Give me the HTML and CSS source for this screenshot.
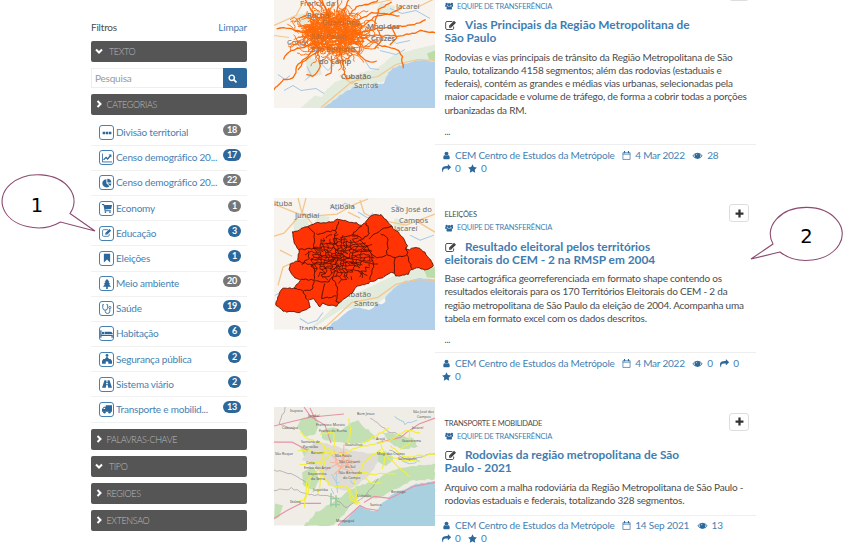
FILE: index.html
```html
<!DOCTYPE html>
<html lang="pt-BR">
<head>
<meta charset="utf-8">
<title>Catálogo de dados</title>
<link rel="stylesheet" href="styles.css">
</head>
<body>
<svg class="defs" aria-hidden="true">
  <symbol id="i-down" viewBox="0 0 16 16"><path d="M2 5l6 6 6-6" fill="none" stroke="currentColor" stroke-width="4"/></symbol>
  <symbol id="i-right" viewBox="0 0 16 16"><path d="M5 2l6 6-6 6" fill="none" stroke="currentColor" stroke-width="4"/></symbol>
  <symbol id="i-search" viewBox="0 0 16 16"><circle cx="6.7" cy="6.7" r="4.7" fill="none" stroke="currentColor" stroke-width="2.6"/><path d="M10 10l5 5" stroke="currentColor" stroke-width="3"/></symbol>
  <symbol id="i-dots" viewBox="0 0 16 16"><path d="M1 6h4v4H1zM6 6h4v4H6zM11 6h4v4h-4z"/></symbol>
  <symbol id="i-chart" viewBox="0 0 16 16"><path d="M.7 1v13.3H16" fill="none" stroke="currentColor" stroke-width="1.4"/><path d="M2.500 11l4-4 2.500 2.500 4.500-5" fill="none" stroke="currentColor" stroke-width="2.200"/><path d="M10.500 2.500H15V7z"/></symbol>
  <symbol id="i-pie" viewBox="0 0 16 16"><path d="M7 2v6.500l4.800 4.500A6.500 6.500 0 1 1 7 2z"/><path d="M8.500 1A6.500 6.500 0 0 1 15 7.300H8.500zM9 8.700h6a6 6 0 0 1-1.800 4z"/></symbol>
  <symbol id="i-cart" viewBox="0 0 16 16"><path d="M0 1.500h3.300L3.700 3H16l-1.300 6.500-9.500 1 .3 1H14V13H4.300L2.300 3H0z"/><circle cx="5.500" cy="14.500" r="1.400"/><circle cx="12.800" cy="14.500" r="1.400"/></symbol>
  <symbol id="i-edit" viewBox="0 0 18 16"><path d="M13 9.500V12a2 2 0 0 1-2 2H3a2 2 0 0 1-2-2V4a2 2 0 0 1 2-2h8" fill="none" stroke="currentColor" stroke-width="1.400"/><path d="M6 8.200L13.500.8l3 3L9 11.300H6zM7.200 9v1.200h1.200z" fill-rule="evenodd"/></symbol>
  <symbol id="i-bookmark" viewBox="0 0 16 16"><path d="M3 1h10v14l-5-4.500L3 15z"/></symbol>
  <symbol id="i-tree" viewBox="0 0 16 16"><path d="M8 0l4 4.500h-1.800l3 3.700h-2l3.300 4.300H9.300V16H6.700v-3.500H1.500l3.300-4.300h-2l3-3.700H4z"/></symbol>
  <symbol id="i-steth" viewBox="0 0 16 16"><path d="M3 1H1.200v5a3.900 3.900 0 0 0 7.800 0V1H7M5.100 10v1.500a3.700 3.700 0 0 0 7.400 0V7" fill="none" stroke="currentColor" stroke-width="1.400"/><circle cx="12.600" cy="5.500" r="1.700" fill="none" stroke="currentColor" stroke-width="1.300"/></symbol>
  <symbol id="i-bed" viewBox="0 0 20 16"><path d="M0 2h2v7h18v5h-2v-3H2v3H0zM7 4.500h9a4 4 0 0 1 4 3.500H7z"/><circle cx="4.500" cy="6.200" r="2"/></symbol>
  <symbol id="i-people" viewBox="0 0 16 16"><circle cx="8" cy="2.300" r="2.200"/><path d="M8 4l3.500 4h2.300l2.200 3v4.500h-6V12H6v3.500H0V11l2.200-3h2.300z"/></symbol>
  <symbol id="i-road" viewBox="0 0 16 16"><path fill-rule="evenodd" d="M4 2h3l-.2 2.500h2.400L9 2h3l4 12H9.800L9.500 10h-3l-.3 4H0zM6.700 6l-.2 2.500h3L9.300 6z"/></symbol>
  <symbol id="i-truck" viewBox="0 0 16 16"><path fill-rule="evenodd" d="M16 2H6v2.500H3L0 8v4.500h16zM1.500 8L3.700 6H5v2z"/><circle cx="4" cy="13" r="2"/><circle cx="12" cy="13" r="2"/></symbol>
  <symbol id="i-group" viewBox="0 0 18 16"><circle cx="3.500" cy="3.600" r="2.500"/><circle cx="14.500" cy="3.600" r="2.500"/><circle cx="9" cy="5" r="3.600"/><path d="M0 9.500q0-4 2-4 1.500 1 3 .7Q5 8 6 9.500H0zM18 9.500q0-4-2-4-1.500 1-3 .7.200 1.800-.8 3.300H18zM3 13.300q0-5 3-5 3 2 6 0 3 0 3 5 0 2.200-2 2.200H5q-2 0-2-2.200z"/></symbol>
  <symbol id="i-user" viewBox="0 0 1792 1792"><path d="M1536 1399q0 109-62.500 187t-150.500 78h-854q-88 0-150.500-78t-62.500-187q0-85 8.500-160.500t31.500-152 58.500-131 94-89 134.500-34.500q131 128 313 128t313-128q76 0 134.500 34.500t94 89 58.500 131 31.500 152 8.500 160.500zm-256-887q0 159-112.500 271.500t-271.500 112.500-271.500-112.500-112.500-271.500 112.500-271.500 271.500-112.500 271.500 112.500 112.500 271.500z"/></symbol>
  <symbol id="i-cal" viewBox="0 0 16 16"><path d="M1.600 3h12.800v12H1.600zM1.600 5.700h12.800" fill="none" stroke="currentColor" stroke-width="1.200"/><path d="M3.500 0h2v4h-2zM10.500 0h2v4h-2z"/></symbol>
  <symbol id="i-eye" viewBox="0 0 18 16"><path fill-rule="evenodd" d="M0 8.500Q3.500 3 9 3t9 5.500Q14.500 14 9 14T0 8.500zm1.700 0Q3 10.500 5 11.700A5 5 0 0 1 5 5Q3 6.500 1.700 8.500zm14.600 0Q15 6.500 13 5a5 5 0 0 1 0 6.700q2-1.200 3.300-3.200zM9 4.700a3 3 0 0 0-3 3h1a2 2 0 0 1 2-2z"/></symbol>
  <symbol id="i-share" viewBox="0 0 1792 1792"><path d="M1792 640q0 26-19 45l-512 512q-19 19-45 19t-45-19-19-45v-256h-224q-98 0-175.500 6t-154 21.500-133 42.500-105.500 69.500-80 101-48.500 138.500-17.500 181q0 55 5 123 0 6 2.500 23.500t2.500 26.500q0 15-8.500 25t-23.500 10q-16 0-28-17-7-9-13-22t-13.500-30-10.500-24q-127-285-127-451 0-199 53-333 162-403 875-403h224v-256q0-26 19-45t45-19 45 19l512 512q19 19 19 45z"/></symbol>
  <symbol id="i-star" viewBox="0 0 16 16"><path d="M8 .5l2.400 4.900 5.400.8-3.900 3.800.9 5.400L8 12.900l-4.800 2.500.9-5.400L.2 6.200l5.400-.8z"/></symbol>
  <symbol id="i-plus" viewBox="0 0 16 16"><path d="M6 1h4v5h5v4h-5v5H6v-5H1V6h5z"/></symbol>
</svg>

<div class="page">
  <aside class="filters">
    <div class="filters-head"><span>Filtros</span><a>Limpar</a></div>
    <div class="bar"><svg><use href="#i-down"/></svg><span class="wide">TEXTO</span></div>
    <div class="search"><span>Pesquisa</span><b><svg><use href="#i-search"/></svg></b></div>
    <div class="bar"><svg><use href="#i-right"/></svg><span>CATEGORIAS</span></div>
    <ul class="cats">
      <li><i><svg><use href="#i-dots"/></svg></i><a>Divisão territorial</a><em>18</em></li>
      <li><i><svg><use href="#i-chart"/></svg></i><a>Censo demográfico 20...</a><em class="on">17</em></li>
      <li><i><svg><use href="#i-pie"/></svg></i><a>Censo demográfico 20...</a><em>22</em></li>
      <li><i><svg><use href="#i-cart"/></svg></i><a>Economy</a><em>1</em></li>
      <li><i><svg><use href="#i-edit"/></svg></i><a>Educação</a><em class="on">3</em></li>
      <li><i><svg><use href="#i-bookmark"/></svg></i><a>Eleições</a><em class="on">1</em></li>
      <li><i><svg><use href="#i-tree"/></svg></i><a>Meio ambiente</a><em>20</em></li>
      <li><i><svg><use href="#i-steth"/></svg></i><a>Saúde</a><em class="on">19</em></li>
      <li><i><svg class="big"><use href="#i-bed"/></svg></i><a>Habitação</a><em class="on">6</em></li>
      <li><i><svg><use href="#i-people"/></svg></i><a>Segurança pública</a><em class="on">2</em></li>
      <li><i><svg><use href="#i-road"/></svg></i><a>Sistema viário</a><em class="on">2</em></li>
      <li><i><svg><use href="#i-truck"/></svg></i><a>Transporte e mobilid...</a><em class="on">13</em></li>
    </ul>
    <div class="bar"><svg><use href="#i-right"/></svg><span>PALAVRAS-CHAVE</span></div>
    <div class="bar"><svg><use href="#i-down"/></svg><span class="wide">TIPO</span></div>
    <div class="bar"><svg><use href="#i-right"/></svg><span>REGIOES</span></div>
    <div class="bar"><svg><use href="#i-right"/></svg><span>EXTENSAO</span></div>
  </aside>

  <main class="results">
    <article class="card first">
      <svg class="map" viewBox="4 -23.500 161 131.500" preserveAspectRatio="none">
        <rect x="4" y="-24" width="161" height="132" fill="#f7f3ee"/>
        <g fill="#e3ebdc"><path class="rough" d="M25 15l22-5 18 8-12 10-22 3z"/><path d="M110 2l16 4-6 9-14-4z"/><path class="rough" d="M58 87l20-12 28-6 18-15 41-10v18l-22 3-26 16-34 5-28 22H45z"/><path d="M35 55l14 5 3 14-14 4zM45 95l13 3-10 10H30z"/></g>
        <path d="M165 50l-8 3 2 6 6 1z" fill="#bcdcaa"/>
        <path class="rough" d="M51 109L72 94 85 85 100 88 104 82 113 84 117 75 122 68 135 63 150 60 167 61V109z" fill="#b3d0ea"/>
        <g fill="none" stroke="#a5c8e6" stroke-width="1"><path d="M8 74l7 5 5-4M14 90l9-5 8 5 15-2 8 5M35 80l6-6-4-8M50 62l8-6 6 8-6 6zM120 8l12 5 14-3 14 8M110 50l16 4 9-5M95 60l5 8 9 1M118 35l8 8 14-3"/></g>
        <g fill="none" stroke="#f3c68d" stroke-width="1.200"><path d="M51 107L82 81l26-5 18-12 22-5 17 1M4 35l15 2M4 25l22-10 8-15M95 5l28-6M70 75l12 8 8-6M145 8l20-10"/></g>
        <g class="maplabel"><text x="30" y="5">Franco da</text><text x="37" y="17">Rocha</text><text x="52" y="24">Guarulhos</text><text x="17" y="44">Cotia</text><text x="41" y="38">São Paulo</text><text x="41" y="51">São Bernard</text><text x="49" y="63">do Camp</text><text x="71" y="78">Cubatão</text><text x="84" y="87">Santos</text><text x="97" y="28">Mogi das</text><text x="101" y="40">Cruzes</text><text x="126" y="8">Jacareí</text></g>
        <g id="roads" fill="none" stroke="#ff6a08"></g>
        <g fill="none" stroke="#ff6a08" stroke-width="1.300"><path class="rough" d="M4 90L12 80 24 77 27 65 37 57 45 47 57 37"/><path class="rough" d="M80 34L108 28 120 27 140 25 155 20"/><path class="rough" d="M80 34L112 35 130 35 144 33 150 30 165 32"/><path class="rough" d="M90 36L114 46 128 49 132 55 133 68"/><path class="rough" d="M70 45L73 64 76 79 82 76"/><path class="rough" d="M75 20L87 6 105 2 117-10"/><path class="rough" d="M80 24L103 12 119 14 133 6"/><path class="rough" d="M45 33L25 30 16 27 7 28"/><path class="rough" d="M45 42L28 48 18 51 14 59"/><path class="rough" d="M60 20L50-5"/><path class="rough" d="M50 23L33-3"/><path class="rough" d="M60 16L47-6"/><path class="rough" d="M67 14L69-8"/><path class="rough" d="M73 16L80-4"/><path class="rough" d="M62 55L62 70 56 76"/><path class="rough" d="M52 48L33 62 28 70"/><path class="rough" d="M82 46L96 61 106 61"/><path class="rough" d="M90 28L105 16 119 14 130 16"/><path class="rough" d="M48 50L50 67 44 76 37 74"/><path class="rough" d="M104 29L108 10 122 2"/><path class="rough" d="M108 28L112 40 104 48"/><path class="rough" d="M122 27L126 38 120 44"/></g>
        <g class="maplabel faint"><text x="37" y="17">Rocha</text><text x="52" y="24">Guarulhos</text><text x="41" y="38">São Paulo</text><text x="41" y="51">São Bernard</text><text x="49" y="63">do Camp</text><text x="71" y="78">Cubatão</text><text x="97" y="28">Mogi das</text><text x="101" y="40">Cruzes</text></g>
      </svg>
      <div class="body">
        <div class="top"><div><div class="team spaced"><svg><use href="#i-group"/></svg>EQUIPE DE TRANSFERÊNCIA</div></div><button><svg><use href="#i-plus"/></svg></button></div>
        <h2><svg><use href="#i-edit"/></svg>Vias Principais da Região Metropolitana de<br>São Paulo</h2>
        <p>Rodovias e vias principais de trânsito da Região Metropolitana de São<br>Paulo, totalizando 4158 segmentos; além das rodovias (estaduais e<br>federais), contém as grandes e médias vias urbanas, selecionadas pela<br>maior capacidade e volume de tráfego, de forma a cobrir todas a porções<br>urbanizadas da RM.</p>
        <p class="more">...</p>
        <div class="meta">
          <span><svg><use href="#i-user"/></svg>CEM Centro de Estudos da Metrópole</span><span><svg><use href="#i-cal"/></svg>4 Mar 2022</span><span class="eye"><svg><use href="#i-eye"/></svg>28</span><span><svg><use href="#i-share"/></svg>0</span><span><svg><use href="#i-star"/></svg>0</span>
        </div>
      </div>
    </article>

    <article class="card second">
      <svg class="map" viewBox="4 8 161 131" preserveAspectRatio="none">
        <rect x="4" y="8" width="161" height="131" fill="#f7f3ee"/>
        <path d="M23 30l14-2 3 10-16 3zM48 25l12 2-3 6-12-1zM125 28l12 4-5 7-9-4zM62 118l22-14 30-14 20-9 31-5v12l-26 2-20 14-14 11-34 4-30 20H38l15-12z" fill="#e3ebdc"/>
        <path d="M165 77l-11 3 3 7 8 1z" fill="#bcdcaa"/>
        <path class="rough" d="M53 141L75 123 85 117 100 120 106 113 114 113 117 104 125 97 135 91 150 88 167 89V141z" fill="#b3d0ea"/>
        <g fill="none" stroke="#a5c8e6" stroke-width="1"><path d="M60 15l7 5 8-7 10 5M88 22l10 6 5-5M140 45l10 5 14-5M125 15l8 4M5 105l8-4M30 128l8 5 9-3 6-8M130 72l8 3"/></g>
        <g fill="none" stroke="#f3c68d" stroke-width="1.300"><path d="M4 14l20 8 12 4 8 10M28 8l4 15 10 3 25-2 18-10 13-5M90 10l4 13 12 6 30 6 29-11M36 8l-4 15-18 20-10 3M10 60l12 6M53 139L82 112l26-5 18-13 22-5 17 1M78 22l12 6M145 30l20 12M8 95l5-18 8-4"/></g>
        <g class="maplabel"><text x="4" y="16">ituba</text><text x="60" y="19">Atibaia</text><text x="25" y="27.500">Jundiaí</text><text x="121" y="22">São José do</text><text x="129" y="32.500">Campos</text><text x="124" y="41">Jacareí</text><text x="71" y="107">Cubatão</text><text x="84" y="115.500">Santos</text><text x="29" y="140">Itanhaém</text></g>
        <defs><clipPath id="rm"><path class="shape"/></clipPath></defs>
        <path class="shape" id="rmshape" d="M23 42L38 36 45 33 62 32 68 29 86 33 90 36 96 32 102 25 112 25 122 37 130 44 137 55 136 60 148 57 155 62 162 72 164 76 156 80 147 77 140 80 138 84 127 86 122 82 110 88 97 93 87 96 82 103 72 110 66 116 52 113 50 117 43 108 38 110 40 117 30 122 14 121 5 114 10 101 13 98 24 98 31 89 24 88 19 79 20 74 28 71 29 60 23 50z" fill="#ff3303"/>
        <g clip-path="url(#rm)" fill="none" stroke="#501000" stroke-width=".9"><g id="cells"></g><g id="borders"></g></g>
        <path class="shape" fill="none" stroke="#5c1505" stroke-width=".9"/>
      </svg>
      <div class="body">
        <div class="top"><div><div class="cat">ELEIÇÕES</div><div class="team"><svg><use href="#i-group"/></svg>EQUIPE DE TRANSFERÊNCIA</div></div><button><svg><use href="#i-plus"/></svg></button></div>
        <h2><svg><use href="#i-edit"/></svg>Resultado eleitoral pelos territórios<br>eleitorais do CEM - 2 na RMSP em 2004</h2>
        <p>Base cartográfica georreferenciada em formato shape contendo os<br>resultados eleitorais para os 170 Territórios Eleitorais do CEM - 2 da<br>região metropolitana de São Paulo da eleição de 2004. Acompanha uma<br>tabela em formato excel com os dados descritos.</p>
        <p class="more">...</p>
        <div class="meta">
          <span><svg><use href="#i-user"/></svg>CEM Centro de Estudos da Metrópole</span><span><svg><use href="#i-cal"/></svg>4 Mar 2022</span><span class="eye"><svg><use href="#i-eye"/></svg>0</span><span><svg><use href="#i-share"/></svg>0</span><span><svg><use href="#i-star"/></svg>0</span>
        </div>
      </div>
    </article>

    <article class="card third">
      <svg class="map" viewBox="4 7 161 118" preserveAspectRatio="none">
        <rect x="4" y="7" width="161" height="118" fill="#f0ede6"/>
        <g fill="#c3e0b4"><path class="rough" d="M32 18l12-4 5 10-3 10-11 2-8-9z"/><path class="rough" d="M50 31l14-4 6 5 12-10 16 7 8 10-20 5-22-2-12-3z"/><path class="rough" d="M112 32l16 2 16 5 4 8-14 2-14-6z"/><path class="rough" d="M62 103l18-14 25-9 20-11 40-6v16l-22 1-22 11-14 7-17-2-14 15-12 14H34l12-13z"/><path class="rough" d="M32 72l12-6 5 12-4 12-12-5z"/><path d="M5 103l8 2-4 12-5 2zM78 25l10-5 6 8zM30 46l12 2 2 6-10 2z"/><path class="rough" d="M100 54l15-3 10 8-10 8z"/></g>
        <path class="rough" d="M45 41l25 6 30 7 10-2-6 18-16 14-12 7-18-6-10-16-16-10z" fill="#dfdcd7"/>
        <path class="rough" d="M66 127L80 115 90 105 100 110 108 110 112 103 119 98 122 94 145 84 167 81V127z" fill="#a9d0de"/>
        <g fill="none" stroke="#a9d0de"><path class="rough" d="M62 73l3 7 5 3"/><path class="rough" d="M80 80l5 5"/><path class="rough" d="M125 16l10 8 12-4"/><path class="rough" d="M132 60l10 4 8-4"/><path class="rough" d="M62 88l2 6"/><path class="rough" d="M66 72L68 92"/></g>
        <g fill="none" stroke="#e892a8" stroke-width="1.100"><path d="M34 7l7 10 14 8 6 18M4 26l20-5 18-4 32-3M4 42l18 0 16 8M165 18l-16 6-12 8-6 5-24 6M40 8l6 13M68 125l22-20 6 3 12 2M4 118l13-8 14-7 20 0M94 102l10-6 16 2 24-12 21-4"/></g>
        <g fill="none" stroke="#a39aa0" stroke-width=".7"><path class="rough" d="M4 90l18-2 16 6 24 2 14 11 18-10 14-18"/><path class="rough" d="M15 7l-6 17 16 6"/><path class="rough" d="M100 18l18 13 12 4"/><path class="rough" d="M120 50l18 10 27-7"/><path class="rough" d="M4 70l20 4 14 10"/></g>
        <g fill="none" stroke="#f7b69b" stroke-width="1"><path d="M58 52l10 8 14 0M64 50l4 16 12 5M74 44l-1 22-9 8M60 62l20 2 10-4M70 55l14 18M55 70l20-10M68 74l8-22"/><circle cx="72" cy="59" r="7"/></g>
        <g fill="none" stroke="#f2ee3d" stroke-width="1.200"><path class="rough" d="M30 31l8 8 12 4 10 8 14 3 15-7 16-3 14-4 18-10 14 3"/><path class="rough" d="M50 34l14-2 0 19"/><path class="rough" d="M78 18l3 12-3 14"/><path class="rough" d="M28 50l20 2 14 1"/><path class="rough" d="M30 64l22-2 10-9"/><path class="rough" d="M40 80l-4 20-10 1"/><path class="rough" d="M54 60l-2 14 8 11 18 2 8 17 2 0-4-26"/><path class="rough" d="M55 45l-5 22-12 12-4 28"/><path class="rough" d="M77 85l5 16 8 2"/><path class="rough" d="M84 78l6-6 14 2 22-1"/><path class="rough" d="M110 45l6 10-4 14"/><path class="rough" d="M110 50l-16 12-6 14"/><path class="rough" d="M109 52l24 8 17 1"/><path class="rough" d="M120 45l14 12 32-3"/><path class="rough" d="M118 57l10 10 12 9"/><path class="rough" d="M90 44l30-16"/><path class="rough" d="M52 67l-4 26"/><path class="rough" d="M140 31l-1 13-9 5"/><path class="rough" d="M95 77l6 6 10 0"/></g>
        <g fill="none" stroke="#9ccb9f" stroke-width="1.500"><path d="M61 93v13M66 95v12M60 98h9M60 104h10"/></g>
        <g class="tiny"><text x="20" y="12">Itupeva</text><text x="38" y="17">Jundiaí</text><text x="87" y="15">Bom Jesus</text><text x="143" y="13">São José dos</text><text x="147" y="18">Campos</text><text x="142" y="29">Jacareí</text><text x="12" y="29">Cabreúva</text><text x="46" y="26">Francisco Morato</text><text x="49" y="32">Franco da Rocha</text><text x="31" y="43">Santana de</text><text x="33" y="48">Parnaíba</text><text x="75" y="46">Guarulhos</text><text x="106" y="40">Arujá</text><text x="132" y="42">Guararema</text><text x="5" y="55">São Roque</text><text x="41" y="54">Barueri</text><text x="65" y="57">São Paulo</text><text x="69" y="63">São Caetano</text><text x="75" y="68">do Sul</text><text x="69" y="74">São Bernardo</text><text x="73" y="79">do Campo</text><text x="107" y="55">Mogi das Cruzes</text><text x="36" y="64">Cotia</text><text x="34" y="69">Embu das Artes</text><text x="38" y="75">Itapecerica</text><text x="41" y="80">da Serra</text><text x="43" y="91">Juquitiba</text><text x="20" y="103">Ibiúna</text><text x="87" y="97">Cubatão</text><text x="100" y="106">Santos</text><text x="121" y="93">Bertioga</text><text x="66" y="122">Mongaguá</text><text x="128" y="60">Salesópolis</text></g>
      </svg>
      <div class="body">
        <div class="top"><div><div class="cat">TRANSPORTE E MOBILIDADE</div><div class="team"><svg><use href="#i-group"/></svg>EQUIPE DE TRANSFERÊNCIA</div></div><button><svg><use href="#i-plus"/></svg></button></div>
        <h2><svg><use href="#i-edit"/></svg>Rodovias da região metropolitana de São<br>Paulo - 2021</h2>
        <p>Arquivo com a malha rodoviária da Região Metropolitana de São Paulo -<br>rodovias estaduais e federais, totalizando 328 segmentos.</p>
        <div class="meta">
          <span><svg><use href="#i-user"/></svg>CEM Centro de Estudos da Metrópole</span><span><svg><use href="#i-cal"/></svg>14 Sep 2021</span><span class="eye"><svg><use href="#i-eye"/></svg>13</span><span><svg><use href="#i-share"/></svg>0</span><span><svg><use href="#i-star"/></svg>0</span>
        </div>
      </div>
    </article>
  </main>
</div>

<svg class="callouts" viewBox="0 0 843 550">
  <path d="M70 213.500L95 231 60.500 222A36 26.500 0 1 1 70 213.500z"/>
  <path d="M780 252L751 259 773 244A36 26.500 0 1 1 780 252z"/>
  <text x="37" y="212">1</text><text x="806.500" y="243">2</text>
</svg>
<script src="maps.js"></script>
</body>
</html>
```
FILE: styles.css
```css
* { box-sizing: border-box; }
body { margin: 0; background: #fff; font-family: Lato, sans-serif; font-size: 10px; letter-spacing: -.21px; color: #4c4c4c; }
svg { display: block; fill: currentColor; }
.defs { position: absolute; width: 0; height: 0; }
.page { width: 843px; height: 550px; overflow: hidden; display: flex; align-items: flex-start; padding-left: 91px; }
a { color: #4581b3; }

.filters { width: 156px; padding-top: 20px; margin-right: 27px; flex: none; }
.filters-head { display: flex; justify-content: space-between; height: 21px; line-height: 14px; }
.bar { height: 21px; margin-bottom: 6px; border-radius: 2px; background: #555; color: #bbb; display: flex; align-items: center; padding: 0 0 1px 4px; font-size: 9px; font-weight: 300; letter-spacing: -.35px; }
.bar svg { width: 8px; height: 8px; color: #fff; }
.bar span { margin-left: 3.500px; }
.bar .wide { margin-left: 6px; }
.search { height: 20px; margin-bottom: 6px; display: flex; border: 1px solid #eee; border-right: 0; align-items: center; padding-left: 3px; color: #999; }
.search span { margin-top: -1px; }
.search b { width: 24.500px; height: 20px; margin-left: auto; background: #2c689c; color: #fff; border-radius: 0 2px 2px 0; display: flex; align-items: center; padding-left: 5px; }
.search b svg { width: 9px; height: 9px; }
.cats { list-style: none; margin: -.5px 0 6.500px; padding: 0; }
.cats li { height: 25.180px; border-bottom: 1px solid #f1f1f1; display: flex; align-items: center; padding: 0 6px 0 8px; }
.cats i { width: 15px; height: 15px; border: 1.300px solid #4581b3; border-radius: 3px; display: flex; align-items: center; justify-content: center; color: #2c689c; margin-right: 2px; flex: none; }
.cats svg { width: 10px; height: 10px; }
.cats svg.big { width: 13px; flex: none; }
.cats a { white-space: nowrap; margin-top: -1px; }
.cats em { margin: -5px 0 0 auto; font-style: normal; font-weight: 700; font-size: 9px; line-height: 12px; height: 12px; padding: 0 4px; min-width: 13px; text-align: center; border-radius: 6px; background: #777; color: #fff; }
.cats em.on { background: #2c689c; }

.results { margin-top: -23.500px; width: 482px; flex: none; }
.card { display: flex; align-items: flex-start; }
.first { height: 221.500px; }
.second { height: 208.500px; }
.map { width: 161px; height: 131.500px; flex: none; }
.third .map { height: 118.500px; margin-top: .5px; }
.maplabel { font: 7.600px "Noto Sans", sans-serif; letter-spacing: 0; fill: #6b6b6b; }
.faint { opacity: .4; }
.tiny { font: 3.600px "Noto Sans", sans-serif; letter-spacing: 0; fill: #555; }
.body { width: 322px; padding-top: 10px; white-space: nowrap; }
.top { display: flex; justify-content: space-between; height: 31.500px; padding: 0 7px 0 9.500px; font-size: 7.500px; line-height: 13px; }
.team { color: #4581b3; display: flex; align-items: center; }
.spaced { margin-top: 13px; }
.team svg { width: 8.500px; height: 8px; margin-right: 4px; color: #2c689c; }
.top button { width: 20px; height: 18px; margin-top: -4px; padding: 0; border: 1px solid #ddd; border-radius: 3px; background: #fff; color: #333; display: flex; align-items: center; justify-content: center; }
.top button svg { width: 9px; height: 9px; }
h2 { margin: 0 0 6.500px 9.500px; height: 26px; font-size: 11.850px; letter-spacing: 0; line-height: 13px; font-weight: 700; color: #3f7db0; }
h2 svg { display: inline-block; width: 12px; height: 11px; margin-right: 8.500px; vertical-align: -2px; color: #444; }
p { margin: 0 0 8px 9.500px; line-height: 13.300px; }
p.more { margin-bottom: 6px; font-size: 9px; }
.third p { margin-bottom: 7.500px; }
.meta { border-top: 1px solid #eee; padding: 3.500px 0 0 7px; display: flex; flex-wrap: wrap; line-height: 13.200px; color: #4581b3; }
.first .meta, .third .meta { padding-right: 20px; }
.meta span { display: flex; align-items: center; margin-right: 7.500px; }
.meta svg { width: 9px; height: 9px; margin-right: 4px; color: #2c689c; }
.meta .eye svg { width: 11px; }

.callouts { position: absolute; left: 0; top: 0; width: 843px; height: 550px; letter-spacing: 0; }
.callouts path { fill: #fff; stroke: #8c4a70; stroke-width: 1.100; }
.callouts text { font: 19.500px "DejaVu Sans", sans-serif; fill: #000; text-anchor: middle; }
```
FILE: maps.js
```js
// Deterministic generator so the maps draw the same way on each load.
let seed = 11;
const rnd = () => (seed = (seed * 16807) % 2147483647) / 2147483647;
const at = (x, y) => `${x.toFixed(1)} ${y.toFixed(1)}`;

// Gives a straight-edged path the small bends of a coast, border or road.
function roughen(path, step, amount) {
  const length = path.getTotalLength();
  const n = Math.max(2, Math.round(length / step));
  const closed = /z$/i.test(path.getAttribute('d'));
  let d = '';
  for (let k = 0; k <= n; k++) {
    const p = path.getPointAtLength(length * k / n);
    d += (k ? 'L' : 'M') + at(p.x + (rnd() - 0.5) * amount, p.y + (rnd() - 0.5) * amount);
  }
  path.setAttribute('d', d + (closed ? 'z' : ''));
}
document.querySelectorAll('.rough').forEach(p => roughen(p, 3, 1.7));

const outline = document.getElementById('rmshape');
roughen(outline, 2.2, 1.3);
document.querySelectorAll('.shape').forEach(p => p.setAttribute('d', outline.getAttribute('d')));

// Road network: short tangled streets in the core, longer ones around it.
let dense = '', sparse = '';
for (let i = 0; i < 480; i++) {
  const far = i > 370;
  const t = rnd() * 6.283, r = Math.sqrt(rnd()) * (far ? 27 : 19);
  let x = 64 + Math.cos(t) * r * 1.4, y = 33 + Math.sin(t) * r * 0.95;
  let a = far ? t + (rnd() - 0.5) * 2.4 : rnd() * 6.283;
  let d = 'M' + at(x, y);
  for (let k = 0; k < (far ? 7 : 5); k++) {
    a += (rnd() - 0.5) * 2.2;
    x += Math.cos(a) * 2.5; y += Math.sin(a) * 2.1;
    d += 'L' + at(x, y);
  }
  if (far) sparse += d; else dense += d;
}
document.getElementById('roads').innerHTML =
  `<path stroke-width="1" d="${dense}"/><path stroke-width=".9" d="${sparse}"/>`;

// Large municipalities around the capital.
const lines = [
  'M28 60L45 58 53 61', 'M37 36L45 44 44 59', 'M46 44L66 40 69 32', 'M66 40L64 55', 'M69 48L83 44 91 36',
  'M83 44L93 49 99 43 96 32', 'M99 48L110 40 122 36', 'M90 50L99 58 104 74 100 90', 'M110 43L118 48 117 64 125 67 124 84',
  'M117 64L107 68 101 64', 'M125 67L138 65 136 58', 'M137 64L142 79', 'M28 71L44 76 45 90 31 89', 'M31 74L39 68 38 61',
  'M45 90L41 100 33 100 37 110', 'M45 90L57 92 62 87 68 99 66 110 70 114', 'M54 93L51 109 66 105', 'M24 98L33 100'
];
const borders = document.getElementById('borders');
borders.innerHTML = lines.map(d => `<path d="${d}"/>`).join('');
borders.querySelectorAll('path').forEach(p => roughen(p, 2.4, 1.8));

// Small territories: staggered, jittered cells, tighter around the centre.
const N = 19, pts = [];
for (let j = 0; j <= N; j++) {
  pts.push([]);
  for (let i = 0; i <= N; i++) {
    const u = (i + (j % 2) * 0.5 + rnd() * 0.9) / N * 2 - 1, v = (j + rnd() * 0.9) / N * 2 - 1;
    const s = 0.6 + 0.4 * Math.hypot(u, v);
    pts[j].push([70 + u * s * 36, 67 + v * s * 27]);
  }
}
const bent = (p, q) => 'M' + at(...p) + 'L' +
  at((p[0] + q[0]) / 2 + (rnd() - 0.5) * 1.4, (p[1] + q[1]) / 2 + (rnd() - 0.5) * 1.4) + 'L' + at(...q);
let grid = '';
for (let j = 0; j < N; j++) for (let i = 0; i < N; i++) {
  const p = pts[j][i];
  const reach = Math.hypot((p[0] - 70) / 32, (p[1] - 67) / 23);
  if (reach > 1) continue;
  const drop = reach > 0.75 ? 0.35 : 0.15;
  if (rnd() > drop) grid += bent(p, pts[j][i + 1]);
  if (rnd() > drop) grid += bent(p, pts[j + 1][i]);
}
document.getElementById('cells').innerHTML = `<path stroke-width=".8" d="${grid}"/>`;
```
